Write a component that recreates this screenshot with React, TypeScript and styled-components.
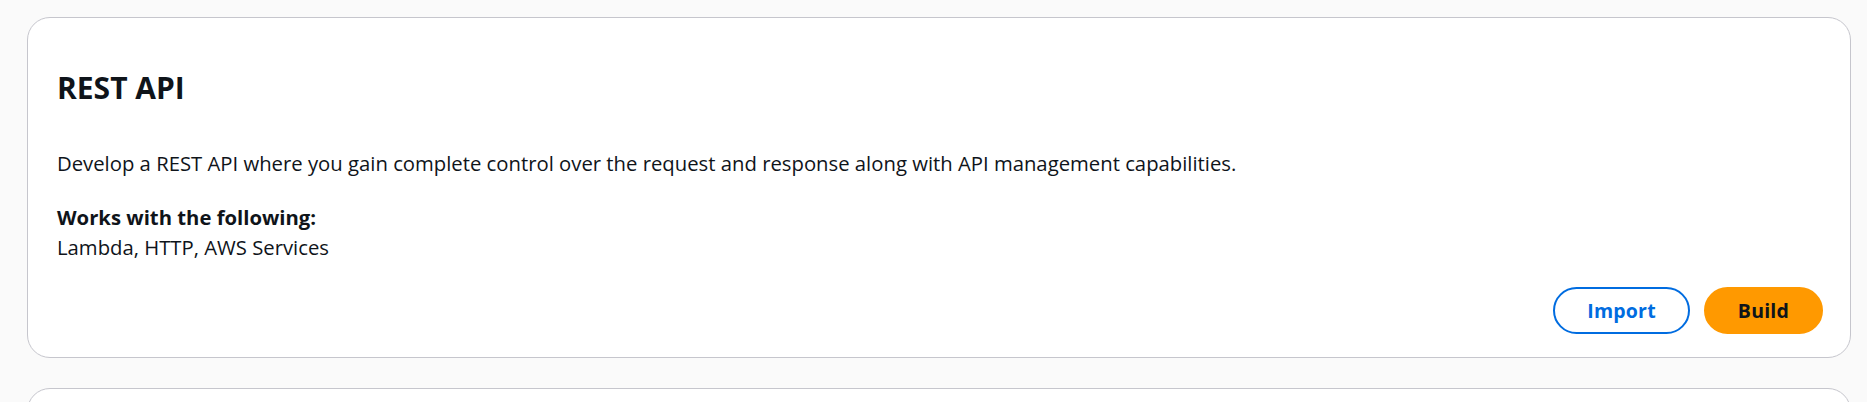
import React from 'react'
import styled, { createGlobalStyle } from 'styled-components'

const GlobalStyle = createGlobalStyle`
  html, body {
    margin: 0;
    padding: 0;
    background: #fafafa;
  }
  body {
    font-family: "Open Sans", "Noto Sans", sans-serif;
    color: #0f141a;
  }
`

interface ApiType {
  title: string
  description: string
  worksWith: string
}

const apiTypes: ApiType[] = [
  {
    title: 'REST API',
    description:
      'Develop a REST API where you gain complete control over the request and response along with API management capabilities.',
    worksWith: 'Lambda, HTTP, AWS Services',
  },
  {
    title: 'REST API Private',
    description:
      'Create a REST API that is only accessible from within a VPC.',
    worksWith: 'Lambda, HTTP, AWS Services',
  },
]

// one card per api type
const ApiCard = ({ api }: { api: ApiType }) => {
  return (
    <Card>
      <Title>{api.title}</Title>
      <Description>{api.description}</Description>
      <KeyValue>
        <Label>Works with the following:</Label>
        <Value>{api.worksWith}</Value>
      </KeyValue>
      <Actions>
        <Button variant="normal">Import</Button>
        <Button variant="primary">Build</Button>
      </Actions>
    </Card>
  )
}

const App: React.FC = () => {
  return (
    <>
      <GlobalStyle />
      <Page>
        {apiTypes.map((api) => (
          <ApiCard key={api.title} api={api} />
        ))}
      </Page>
    </>
  )
}

const Page = styled.div`
  display: flex;
  flex-direction: column;
  gap: 30px;
  padding: 17px 16px 24px 27px;
`

const Card = styled.section`
  display: flex;
  flex-direction: column;
  background: #ffffff;
  border: 1px solid #c6c6cd;
  border-radius: 23px;
  padding: 53px 27px 23px 29px;
`

const Title = styled.h2`
  margin: 0;
  font-size: 30px;
  line-height: 34px;
  font-weight: 700;
`

const Description = styled.p`
  margin: 44px 0 0;
  font-size: 20.3px;
  line-height: 28.6px;
`

const KeyValue = styled.div`
  display: flex;
  flex-direction: column;
  margin-top: 25px;
  font-size: 20.3px;
  line-height: 28.6px;
`

const Label = styled.div`
  font-weight: 700;
`

const Value = styled.div`
  margin-top: 1.5px;
`

const Actions = styled.div`
  display: flex;
  justify-content: flex-end;
  gap: 14px;
  margin-top: 26px;
`

const Button = styled.button<{ variant: 'normal' | 'primary' }>`
  height: 47px;
  padding: 0 32px;
  border-radius: 24px;
  border: 2.5px solid ${(p) => (p.variant === 'primary' ? '#ff9900' : '#006ce0')};
  background: ${(p) => (p.variant === 'primary' ? '#ff9900' : '#ffffff')};
  color: ${(p) => (p.variant === 'primary' ? '#0f141a' : '#006ce0')};
  font-family: "Open Sans", "Noto Sans", sans-serif;
  font-size: 19.5px;
  font-weight: 700;
  letter-spacing: 0.2px;
  cursor: pointer;
`

export default App
